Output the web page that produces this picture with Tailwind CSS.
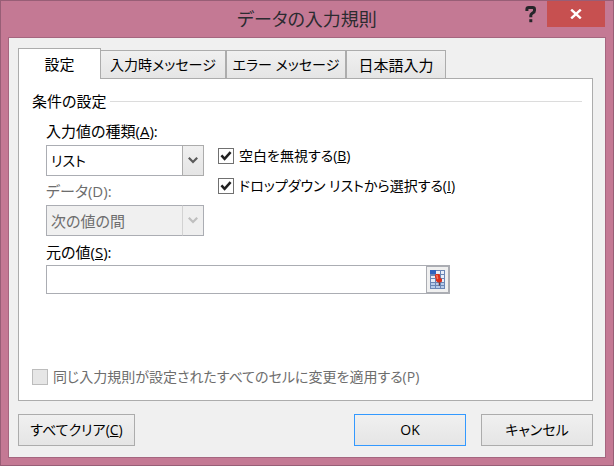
<!DOCTYPE html>
<html lang="ja">
  <head>
    <meta charset="UTF-8" />
    <meta name="viewport" content="width=device-width, initial-scale=1.0" />
    <title>データの入力規則</title>
    <script src="https://cdn.jsdelivr.net/npm/@tailwindcss/browser@4"></script>
  </head>
  <body class="min-h-screen flex flex-col bg-[#c47994] border border-[#985e76] font-['Open_Sans','Noto_Sans_CJK_JP',sans-serif] [font-feature-settings:'palt'] text-[15px] leading-5 text-black">

    <!-- Title bar -->
    <header class="h-9 grid grid-cols-[1fr_auto_1fr] items-start">
      <h1 class="col-start-2 pt-1.5 text-lg leading-6 text-[#2b2b30]">データの入力規則</h1>
      <div class="flex justify-end pr-2">
        <button type="button" aria-label="ヘルプ" class="w-8 h-[26px] flex items-center justify-center">
          <svg class="w-3 h-[18px]" viewBox="0 0 12 18" fill="none" stroke="#26262a" stroke-width="3">
            <path d="M1.9 6V4.2Q1.9 2.4 3.8 2.4H7.6Q9.5 2.4 9.5 4.2V5.6Q9.5 7 8 7.8L7 8.4Q5.8 9.2 5.8 10.4V12.2" />
            <path d="M5.8 14.2V17.2" />
          </svg>
        </button>
        <button type="button" aria-label="閉じる" class="w-[58px] h-[26px] bg-[#c75050] flex items-center justify-center">
          <svg class="w-3 h-[10px]" viewBox="0 0 12 10" stroke="#fff" stroke-width="2.4">
            <path d="M1.2 .6L10.8 9.4M10.8 .6L1.2 9.4" />
          </svg>
        </button>
      </div>
    </header>

    <main class="flex-1 mx-[7px] mb-[7px] border border-[#a5667f] bg-[#f0f0f0] pt-2.5 pl-[9px] pr-3 pb-[11px] flex flex-col">

      <!-- Tabs -->
      <div role="tablist" class="relative flex items-end -mb-px">
        <button type="button" role="tab" aria-selected="true" class="w-[83px] h-[31px] bg-white border border-b-0 border-[#acacac]">設定</button>
        <button type="button" role="tab" aria-selected="false" class="w-[125px] h-[29px] bg-linear-to-b from-[#f0f0f0] to-[#e5e5e5] border border-l-0 border-[#acacac] text-sm">入力時メッセージ</button>
        <button type="button" role="tab" aria-selected="false" class="w-[120px] h-[29px] bg-linear-to-b from-[#f0f0f0] to-[#e5e5e5] border border-[#acacac] text-sm">エラー メッセージ</button>
        <button type="button" role="tab" aria-selected="false" class="w-[100px] h-[29px] bg-linear-to-b from-[#f0f0f0] to-[#e5e5e5] border border-[#acacac]">日本語入力</button>
      </div>

      <!-- Settings panel -->
      <div role="tabpanel" class="flex-1 bg-white border border-[#acacac] pt-3 pl-[13px] pr-2.5 pb-[13px] flex flex-col">
        <div class="flex items-center gap-1">
          <h2>条件の設定</h2>
          <div class="flex-1 h-px bg-[#dcdcdc]"></div>
        </div>

        <div class="pl-3.5 pt-2.5 flex gap-3.5">
          <div class="w-[158px]">
            <label for="allow" class="block">入力値の種類(<u>A</u>):</label>
            <div class="relative mt-1 h-[31px]">
              <select id="allow" class="w-full h-full appearance-none border border-[#abadb3] bg-white pl-1 text-sm">
                <option>リスト</option>
              </select>
              <span class="absolute inset-y-0 right-0 w-[22px] border border-[#acacac] bg-linear-to-b from-[#f0f0f0] to-[#e5e5e5] flex items-center justify-center pointer-events-none">
                <svg class="w-2.5 h-[7px]" viewBox="0 0 10 7" fill="none" stroke="#5a5a5a" stroke-width="2.2"><path d="M.8 .8L5 5L9.2 .8" /></svg>
              </span>
            </div>
            <label for="data" class="block mt-[5px] text-[#6d6d6d]">データ(D):</label>
            <div class="relative mt-1 h-[31px]">
              <select id="data" disabled class="w-full h-full appearance-none border border-[#abadb3] bg-[#f0f0f0] text-[#6d6d6d] pl-1 opacity-100">
                <option>次の値の間</option>
              </select>
              <span class="absolute inset-y-0 right-0 w-[22px] border border-[#d2d2d2] border-y-[#abadb3] border-r-[#abadb3] bg-[#efefef] flex items-center justify-center pointer-events-none">
                <svg class="w-2.5 h-[7px]" viewBox="0 0 10 7" fill="none" stroke="#bfbfbf" stroke-width="2.2"><path d="M.8 .8L5 5L9.2 .8" /></svg>
              </span>
            </div>
          </div>

          <div class="pt-[25px] flex flex-col gap-2.5 text-sm">
            <label class="flex items-center gap-[5px]">
              <span class="relative size-4">
                <input type="checkbox" checked class="peer block size-4 appearance-none border border-[#707070] bg-white" />
                <svg class="absolute inset-0 size-4 hidden peer-checked:block pointer-events-none" viewBox="0 0 16 16" fill="none" stroke="#212121" stroke-width="2.6"><path d="M3.4 7.4L6.6 10.8L12.6 4.2" /></svg>
              </span>
              <span>空白を無視する(<u>B</u>)</span>
            </label>
            <label class="flex items-center gap-[5px]">
              <span class="relative size-4">
                <input type="checkbox" checked class="peer block size-4 appearance-none border border-[#707070] bg-white" />
                <svg class="absolute inset-0 size-4 hidden peer-checked:block pointer-events-none" viewBox="0 0 16 16" fill="none" stroke="#212121" stroke-width="2.6"><path d="M3.4 7.4L6.6 10.8L12.6 4.2" /></svg>
              </span>
              <span>ドロップダウン リストから選択する(<u>I</u>)</span>
            </label>
          </div>
        </div>

        <div class="pl-3.5 pt-1.5">
          <label for="source" class="block">元の値(<u>S</u>):</label>
          <div class="mt-[3px] w-[404px] h-[29px] flex border border-[#abadb3]">
            <input id="source" type="text" class="flex-1 min-w-0 px-1 bg-white outline-none" />
            <button type="button" aria-label="範囲を選択" class="w-[23px] bg-[#f0f0f0] border border-[#abadb3] flex items-center justify-center">
              <svg class="w-[15px] h-[19px]" viewBox="0 0 15 19">
                <rect width="15" height="19" fill="#6a86b5" />
                <path d="M1 6h4v2H1zM6 1h4v3H6zM11 1h3v3h-3zM6 5h4v3H6zM11 5h3v3h-3zM1 9h4v3H1zM6 9h4v3H6zM11 9h3v3h-3z" fill="#e8eef8" />
                <path d="M1 13h4v2H1zM6 13h4v2H6zM11 13h3v2h-3zM1 16h4v2H1zM6 16h4v2H6zM11 16h3v2h-3z" fill="#b7cbea" />
                <path d="M0 0h6v4H0z" fill="#2f63c0" />
                <path d="M5 5L6 4H9L10 5V7.5L12 9V11.5L10.5 12.5H8L6 11V9L5 7z" fill="#d9301c" />
                <path d="M6 5H7.6L8.4 8.6L7 9.6z" fill="#f47a60" />
                <path d="M9.3 12.5V15.5" stroke="#4a1a18" />
              </svg>
            </button>
          </div>
        </div>

        <label class="mt-auto flex items-center gap-[5px] text-sm text-[#6d6d6d]">
          <input type="checkbox" disabled class="size-4 appearance-none border border-[#bcbcbc] bg-[#e6e6e6]" />
          <span>同じ入力規則が設定されたすべてのセルに変更を適用する(P)</span>
        </label>
      </div>

      <!-- Dialog buttons -->
      <div class="mt-[13px] flex gap-[15px] text-sm">
        <button type="button" class="mr-auto w-[117px] h-8 border border-[#acacac] bg-linear-to-b from-[#f0f0f0] to-[#e5e5e5]">すべてクリア(<u>C</u>)</button>
        <button type="button" class="w-[112px] h-8 border border-[#3399ff] bg-linear-to-b from-[#f0f0f0] to-[#e5e5e5]">OK</button>
        <button type="button" class="w-[112px] h-8 border border-[#acacac] bg-linear-to-b from-[#f0f0f0] to-[#e5e5e5]">キャンセル</button>
      </div>
    </main>
  </body>
</html>
